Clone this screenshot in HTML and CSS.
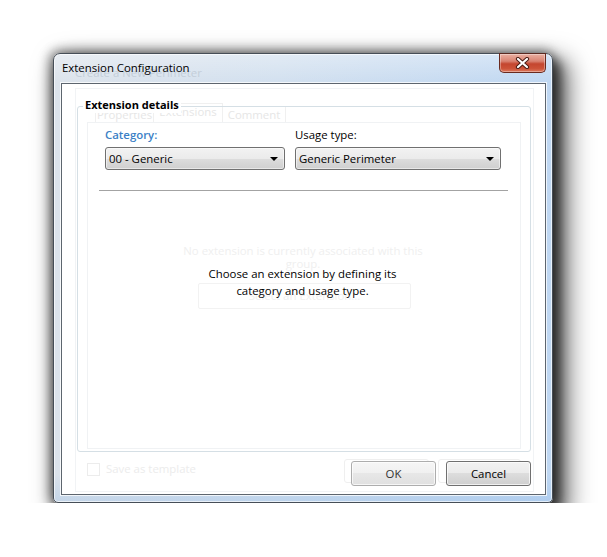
FILE: index.html
```html
<!DOCTYPE html>
<html lang="en">
<head>
<meta charset="utf-8">
<title>Extension Configuration</title>
<link rel="stylesheet" href="styles.css">
</head>
<body>
<div class="page">
  <div class="window">
    <div class="titlebar">
      <span class="title">Extension Configuration</span>
      <span class="ghost-title">Create a New Perimeter</span>
    </div>
    <div class="close" aria-label="Close">
      <svg width="15" height="12" viewBox="0 0 15 12">
        <path d="M3 2 L12 10 M12 2 L3 10" stroke="#4a1c14" stroke-width="4.2" stroke-linecap="round" fill="none"/>
        <path d="M3 2 L12 10 M12 2 L3 10" stroke="#ffffff" stroke-width="2.2" stroke-linecap="round" fill="none"/>
      </svg>
    </div>
    <div class="client">
      <div class="ghost-layer" aria-hidden="true">
        <div class="g-frame"></div>
        <div class="g-tab g-tab-props">Properties</div>
        <div class="g-tab g-tab-ext">Extensions</div>
        <div class="g-tab g-tab-comment">Comment</div>
        <div class="g-panel"></div>
        <div class="g-msg">No extension is currently associated with this<br>group.</div>
        <div class="g-select">Select an Extension...</div>
        <div class="g-check"></div>
        <div class="g-check-label">Save as template</div>
        <div class="g-btn g-ok">OK</div>
        <div class="g-btn g-cancel">Cancel</div>
      </div>
      <div class="group">
        <div class="legend">Extension details</div>
        <div class="fields">
          <div class="field field-cat">
            <span class="label label-blue">Category:</span>
            <div class="combo"><span class="combo-text">00 - Generic</span><span class="arrow"></span></div>
          </div>
          <div class="field field-usage">
            <span class="label">Usage type:</span>
            <div class="combo"><span class="combo-text">Generic Perimeter</span><span class="arrow"></span></div>
          </div>
        </div>
        <div class="sep"></div>
        <div class="message">Choose an extension by defining its<br>category and usage type.</div>
      </div>
      <div class="footer">
        <button class="btn btn-ok">OK</button>
        <button class="btn btn-cancel">Cancel</button>
      </div>
    </div>
  </div>
</div>
</body>
</html>
```

FILE: styles.css
```css
* { box-sizing: border-box; }
html, body { margin: 0; padding: 0; background: #ffffff; }
body {
  font-family: "Open Sans", "Noto Sans", sans-serif;
  font-size: 11.4px;
  color: #000;
}
.page { padding: 53px 0 0 53px; }

.window {
  position: relative;
  width: 500px;
  height: 450px;
  border: 1px solid #464e57;
  border-radius: 7px 7px 5px 5px;
  padding: 0 6px 7px 7px;
  background:
    linear-gradient(to bottom, rgba(255,255,255,0.35) 0px, rgba(255,255,255,0) 29px, rgba(255,255,255,0) 420px, rgba(120,170,225,0.25) 450px),
    linear-gradient(to right, #dce3eb 0%, #d2e0ef 45%, #bfd7f2 100%);
  box-shadow:
    10px 12px 24px 6px rgba(0,0,0,0.55),
    6px 8px 12px 2px rgba(0,0,0,0.55),
    -3px 0 12px 1px rgba(0,0,0,0.3),
    0 -3px 12px 0 rgba(0,0,0,0.25),
    inset 0 0 0 1px rgba(255,255,255,0.65);
}

.titlebar {
  position: relative;
  height: 29px;
  padding: 6px 0 0 1px;
}
.title { line-height: 16px; color: #000; position: relative; z-index: 1; }
.ghost-title {
  position: absolute;
  left: 14px;
  top: 11px;
  line-height: 16px;
  color: #c3ced9;
}

.close {
  position: absolute;
  top: -1px;
  right: 6px;
  width: 47px;
  height: 20px;
  border: 1px solid #6a2a1e;
  border-top-color: #5a2a22;
  border-radius: 0 0 5px 5px;
  background: linear-gradient(to bottom, #eab0a2 0%, #d98271 40%, #c4462f 55%, #cc5238 80%, #dc7a5f 100%);
  box-shadow: inset 0 0 0 1px rgba(255,255,255,0.35);
  display: flex;
  align-items: center;
  justify-content: center;
}

.client {
  position: relative;
  height: 412px;
  border: 1px solid #5d656e;
  background: #ffffff;
  box-shadow: 0 0 0 1px rgba(255,255,255,0.75);
}

/* faded remains of the previous dialog */
.ghost-layer { position: absolute; inset: 0; pointer-events: none; color: #e8e8e8; }
.g-frame {
  position: absolute; left: 13px; top: 4px; width: 459px; height: 404px;
  border: 1px solid #f1f3f5;
}
.g-tab {
  position: absolute; top: 22px; height: 17px; line-height: 15px;
  border: 1px solid #f0f0f0; border-bottom: none; text-align: center;
  color: #e6e6e6;
}
.g-tab-props { left: 33px; width: 59px; }
.g-tab-ext { left: 91px; top: 19px; height: 20px; width: 70px; line-height: 16px; }
.g-tab-comment { left: 160px; width: 64px; }
.g-panel {
  position: absolute; left: 25px; top: 38px; width: 434px; height: 327px;
  border: 1px solid #f0f2f4;
}
.g-msg {
  position: absolute; left: 114px; top: 160px; width: 254px;
  text-align: center; line-height: 13px; color: #efefef;
}
.g-select {
  position: absolute; left: 136px; top: 199px; width: 213px; height: 26px;
  border: 1px solid #f2f2f2; border-radius: 2px; text-align: center; line-height: 24px;
  color: #efefef;
}
.g-check {
  position: absolute; left: 25px; top: 379px; width: 13px; height: 13px;
  border: 1px solid #ececec;
}
.g-check-label { position: absolute; left: 44px; top: 377px; line-height: 16px; color: #ececec; }
.g-btn {
  position: absolute; top: 375px; height: 24px; line-height: 22px; text-align: center;
  border: 1px solid #efefef; border-radius: 3px; color: #e4e4e4;
}
.g-ok { left: 282px; width: 85px; }
.g-cancel { left: 376px; width: 83px; }

/* group box */
.group {
  position: relative;
  margin: 22px 0 0 15px;
  width: 454px;
  height: 346px;
  border: 1px solid #d5dfe5;
  border-radius: 3px;
}
.legend {
  position: absolute;
  left: 5px;
  top: -10px;
  padding: 0 2px;
  line-height: 16px;
  font-size: 11px;
  font-weight: bold;
  background: #ffffff;
}
.fields {
  position: relative;
  display: flex;
  gap: 10px;
  padding: 20px 0 0 27px;
}
.field { display: flex; flex-direction: column; gap: 4px; }
.field-cat { width: 180px; }
.field-usage { width: 206px; }
.label { line-height: 16px; }
.label-blue { color: #3b7fc6; font-weight: 600; }
.combo {
  height: 23px;
  border: 1px solid #707070;
  border-radius: 3px;
  background: linear-gradient(to bottom, #f2f2f2 0%, #ebebeb 50%, #dddddd 50%, #cfcfcf 100%);
  box-shadow: inset 0 0 0 1px rgba(255,255,255,0.5);
  display: flex;
  align-items: center;
  padding: 0 6px 0 3px;
}
.combo-text { flex: 1; line-height: 16px; }
.arrow {
  width: 0; height: 0;
  border-left: 4px solid transparent;
  border-right: 4px solid transparent;
  border-top: 4px solid #000;
  margin-top: 1px;
}
.sep {
  margin: 20px 0 0 21px;
  width: 409px;
  height: 1px;
  background: #a3a3a3;
}
.message {
  position: relative;
  margin-top: 74px;
  padding-right: 3px;
  text-align: center;
  line-height: 17px;
}

.footer {
  position: relative;
  display: flex;
  justify-content: flex-end;
  gap: 10px;
  margin: 9px 0 0 15px;
  width: 454px;
}
.btn {
  width: 85px;
  height: 25px;
  padding: 0;
  font: inherit;
  color: #000;
  border-radius: 3px;
  background: linear-gradient(to bottom, #f2f2f2 0%, #ebebeb 50%, #dddddd 50%, #cfcfcf 100%);
  box-shadow: inset 0 0 0 1px rgba(255,255,255,0.7);
  line-height: 23px;
}
.btn-ok {
  border: 1px solid #adadad;
  background: linear-gradient(to bottom, #f6f6f6 0%, #f0f0f0 50%, #e7e7e7 50%, #e0e0e0 100%);
  color: #333;
}
.btn-cancel { border: 1px solid #707070; }
```
